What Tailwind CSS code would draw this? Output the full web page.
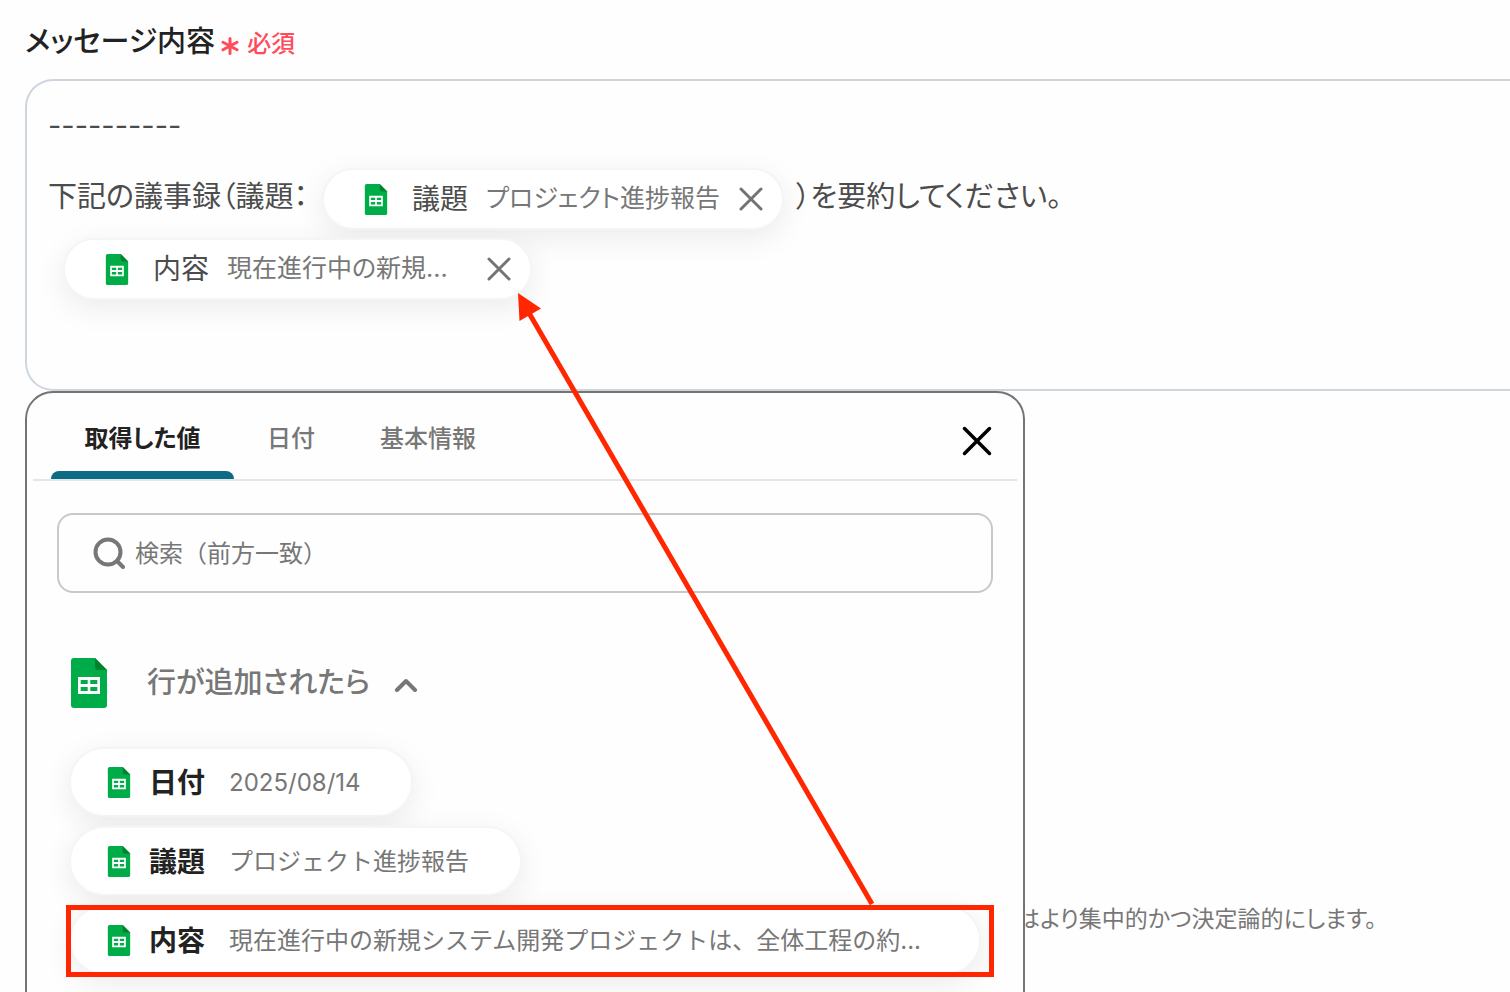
<!DOCTYPE html>
<html lang="ja">
<head>
    <meta charset="UTF-8">
    <meta name="viewport" content="width=device-width, initial-scale=1.0">
    <title>メッセージ内容</title>
    <script src="https://cdn.jsdelivr.net/npm/@tailwindcss/browser@4"></script>
</head>
<body class="bg-[#fefefe] font-['Inter','Noto_Sans_CJK_JP',sans-serif] text-[#4c4c4c]">

<!-- スプレッドシートのアイコン -->
<svg class="hidden">
    <symbol id="sheets" viewBox="0 0 36 50">
        <path fill="#00ac47" d="M3 0h21l12 12v35a3 3 0 0 1-3 3H3a3 3 0 0 1-3-3V3a3 3 0 0 1 3-3z"/>
        <path fill="#00832d" d="M24 0l12 12h-9a3 3 0 0 1-3-3z"/>
        <path fill="#fff" fill-rule="evenodd" d="M7 19h22v17H7zM9.700 22v4h7v-4zM19.300 22v4h7v-4zM9.700 29v4h7v-4zM19.300 29v4h7v-4z"/>
    </symbol>
    <symbol id="close" viewBox="0 0 24 24">
        <path fill="none" stroke="currentColor" stroke-linecap="round" d="M2 2l20 20M22 2L2 22"/>
    </symbol>
</svg>

<main class="relative h-screen overflow-hidden pl-[25px]">

    <div class="flex h-[79px] items-center gap-[6px] pt-1 [font-feature-settings:'palt']">
        <h1 id="message-label" class="text-[29px] font-medium text-[#222]">メッセージ内容</h1>
        <div class="flex items-center gap-2 pt-1 text-[24px] font-medium text-[#ff4b5c]">
            <svg class="mt-1 size-[18px]" viewBox="0 0 18 18" fill="none" stroke="currentColor" stroke-width="3" stroke-linecap="round"><path d="M9 1.500v15M2 5.200l14 7.600M16 5.200L2 12.800"/></svg>
            <span>必須</span>
        </div>
    </div>

    <!-- メッセージ入力欄 -->
    <div class="relative">
        <div role="textbox" aria-labelledby="message-label" class="h-[312px] rounded-l-[28px] border-2 border-r-0 border-[#cdd6de] pt-[9px] pl-[21px] text-[29px] whitespace-nowrap [font-feature-settings:'palt']">
            <p class="flex h-[74px] items-center pb-[2px]">----------</p>
            <div class="flex h-[70px] items-center">
                <span class="pb-1">下記の議事録（議題：</span>
                <span class="ml-[14px] flex h-[62px] w-[462px] items-center rounded-full border-2 border-[#f5f5f5] bg-white pl-10 text-[28px] shadow-[0_8px_30px_rgba(0,0,0,0.08)]">
                    <svg class="h-[31px] w-[24px]"><use href="#sheets"/></svg>
                    <span class="ml-6">議題</span>
                    <span class="ml-[18px] text-[25px] text-[#777]">プロジェクト進捗報告</span>
                    <button type="button" aria-label="議題を削除" class="mr-[19px] ml-auto text-[#747474]"><svg class="block size-[24px]" stroke-width="3"><use href="#close"/></svg></button>
                </span>
                <span class="ml-3 pb-1">）を要約してください。</span>
            </div>
            <div class="flex h-[70px] items-center">
                <span class="ml-[15px] flex h-[62px] w-[469px] items-center rounded-full border-2 border-[#f5f5f5] bg-white pl-10 text-[28px] shadow-[0_8px_30px_rgba(0,0,0,0.08)]">
                    <svg class="h-[31px] w-[24px]"><use href="#sheets"/></svg>
                    <span class="ml-6">内容</span>
                    <span class="ml-[18px] text-[25px] text-[#777]">現在進行中の新規...</span>
                    <button type="button" aria-label="内容を削除" class="mr-[19px] ml-auto text-[#747474]"><svg class="block size-[24px]" stroke-width="3"><use href="#close"/></svg></button>
                </span>
            </div>
        </div>

        <!-- 値の選択ポップアップ -->
        <section class="absolute top-full left-0 z-10 h-[800px] w-full max-w-[1000px] rounded-[28px] border-2 border-[#747474] bg-[#fefefe] px-[6px]">
            <div class="flex h-[88px] items-stretch border-b-2 border-[#e4e7e8] pl-[18px] text-[24px] font-medium text-[#777] [font-feature-settings:'palt']">
                <button type="button" class="flex w-[183px] flex-col items-center font-bold text-[#222]">
                    <span class="flex flex-1 items-center pt-[14px]">取得した値</span>
                    <span class="h-2 w-full rounded-t-lg bg-[#0b6b85]"></span>
                </button>
                <button type="button" class="px-[33px] pt-[6px]">日付</button>
                <button type="button" class="px-8 pt-[6px]">基本情報</button>
                <button type="button" aria-label="閉じる" class="mr-[25px] ml-auto pt-[10px] text-black"><svg class="size-[30px]" stroke-width="2.800"><use href="#close"/></svg></button>
            </div>

            <div class="px-6 pt-8">
                <label class="flex h-[80px] items-center gap-[10px] rounded-2xl border-2 border-[#c8c8c8] pl-[34px]">
                    <svg class="size-[32px] text-[#777]" viewBox="0 0 32 32" fill="none" stroke="currentColor" stroke-width="4" stroke-linecap="round"><circle cx="15" cy="15" r="12.500"/><path d="M24 24l6 6"/></svg>
                    <input type="text" aria-label="検索" placeholder="検索（前方一致）" class="flex-1 pt-[2px] text-[24px] outline-none placeholder:text-[#777]">
                </label>

                <button type="button" class="mt-[65px] ml-[14px] flex items-center text-[29px] font-medium text-[#777] [font-feature-settings:'palt']">
                    <svg class="h-[50px] w-[36px]"><use href="#sheets"/></svg>
                    <span class="ml-10">行が追加されたら</span>
                    <svg class="mt-1 ml-6 h-[14px] w-[24px]" viewBox="0 0 24 14" fill="none" stroke="currentColor" stroke-width="4" stroke-linecap="round" stroke-linejoin="round"><path d="M3 12l9-9 9 9"/></svg>
                </button>

                <ul class="mt-[39px] ml-3 flex flex-col items-start gap-[9px]">
                    <li><button type="button" class="flex h-[70px] w-[344px] items-center rounded-full border-2 border-[#f5f5f5] bg-white pl-9 shadow-[0_8px_30px_rgba(0,0,0,0.08)]">
                        <svg class="h-[31px] w-[24px]"><use href="#sheets"/></svg>
                        <span class="ml-[18px] pt-[2px] text-[28px] font-bold text-[#222]">日付</span>
                        <span class="ml-6 pt-[2px] text-[24px] text-[#777]">2025/08/14</span>
                    </button></li>
                    <li><button type="button" class="flex h-[70px] w-[453px] items-center rounded-full border-2 border-[#f5f5f5] bg-white pl-9 shadow-[0_8px_30px_rgba(0,0,0,0.08)]">
                        <svg class="h-[31px] w-[24px]"><use href="#sheets"/></svg>
                        <span class="ml-[18px] pt-[2px] text-[28px] font-bold text-[#222]">議題</span>
                        <span class="ml-6 pt-[2px] text-[24px] text-[#777]">プロジェクト進捗報告</span>
                    </button></li>
                    <li class="relative"><button type="button" class="flex h-[70px] w-[912px] items-center rounded-full border-2 border-[#f5f5f5] bg-white pl-9 shadow-[0_8px_30px_rgba(0,0,0,0.08)]">
                        <svg class="h-[31px] w-[24px]"><use href="#sheets"/></svg>
                        <span class="ml-[18px] pt-[2px] text-[28px] font-bold text-[#222]">内容</span>
                        <span class="ml-6 pt-[2px] text-[24px] text-[#777]">現在進行中の新規システム開発プロジェクトは、全体工程の約...</span>
                    </button>
                    <span class="absolute top-0 -right-[13px] -bottom-[2px] -left-[3px] border-5 border-[#ff2600]"></span></li>
                </ul>
            </div>
        </section>
    </div>

    <p class="mt-[511px] pl-[992px] text-[23px] whitespace-nowrap text-[#777] [font-feature-settings:'palt']">はより集中的かつ決定論的にします。</p>

    <!-- 矢印 -->
    <svg class="pointer-events-none absolute top-0 left-0 z-20 h-[992px] w-[1510px]" viewBox="0 0 1510 992">
        <path stroke="#ff2600" stroke-width="5" d="M872 904L529 313"/>
        <path fill="#ff2600" d="M518 293l23 15.500-21.500 12.500z"/>
    </svg>
</main>

</body>
</html>
